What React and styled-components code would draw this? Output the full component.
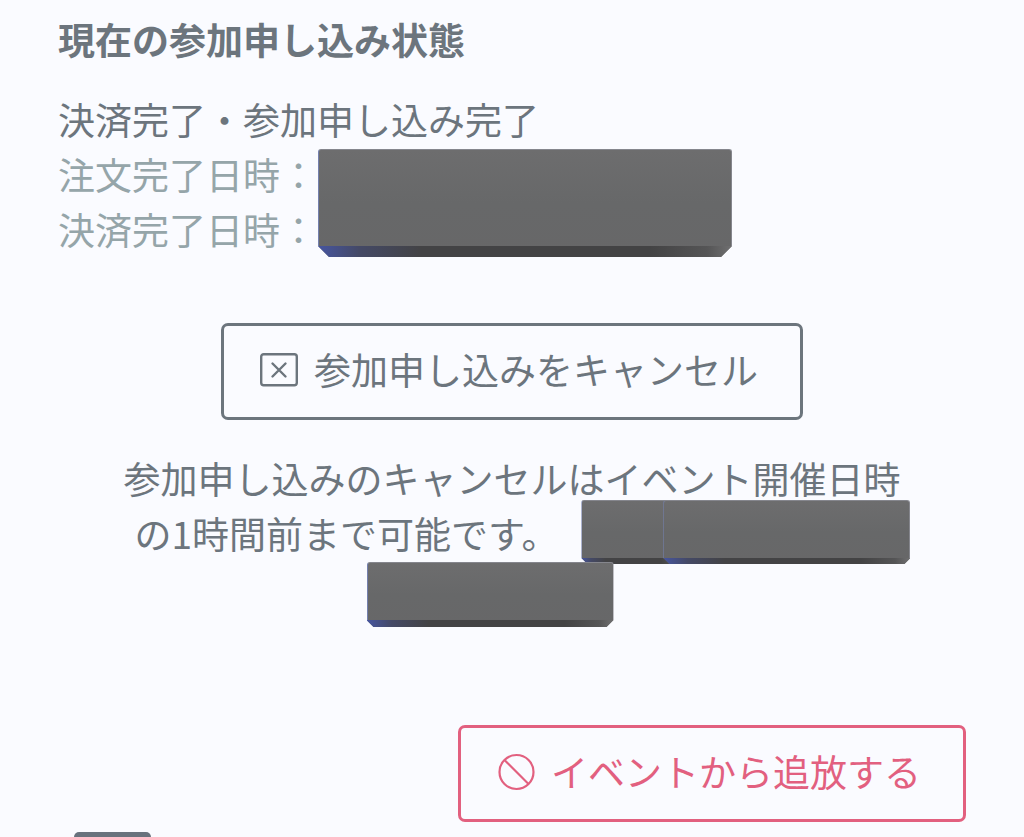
import React from "react";
import styled, { createGlobalStyle } from "styled-components";

const GlobalStyle = createGlobalStyle`
  *, *::before, *::after { box-sizing: border-box; }
  body {
    margin: 0;
    background: #fafbff;
    color: #6c757d;
    font-family: "Noto Sans CJK JP", "Noto Sans", sans-serif;
    font-size: 37px;
    line-height: 55px;
  }
`;

const Page = styled.main`
  display: flex;
  flex-direction: column;
  padding: 12px 58px 0;
`;

const Heading = styled.h1`
  margin: 0 0 25px;
  font-size: 37px;
  line-height: 55px;
  font-weight: 700;
`;

const Status = styled.p`
  margin: 0;
`;

const Dates = styled.div`
  display: flex;
  align-items: flex-start;
  color: #95a5a9;
`;

const DateLabels = styled.div`
  display: flex;
  flex-direction: column;
`;

const Block = styled.span`
  display: inline-block;
  position: relative;
  flex: none;
  width: ${(p) => p.$width}px;
  height: ${(p) => p.$height}px;
  margin: ${(p) => p.$margin || "0"};
  vertical-align: top;
  --cut: ${(p) => p.$bevel}px;
  background: linear-gradient(#6d6d6e, #676869 50%, #676768);
  border: 1px solid #85868d;
  border-left-color: #7480ae;
  border-bottom: 0;
  border-radius: 3px 3px 0 0;
  clip-path: polygon(
    0 0,
    100% 0,
    100% calc(100% - var(--cut)),
    calc(100% - var(--cut)) 100%,
    var(--cut) 100%,
    0 calc(100% - var(--cut))
  );

  &::after {
    content: "";
    position: absolute;
    left: -1px;
    right: -1px;
    bottom: 0;
    height: var(--cut);
    background: linear-gradient(90deg, #4655a0, #444966 10%, #434345 25%, #434344 80%, #555556 94%, #707071);
  }
`;

const Button = styled.button`
  display: flex;
  align-items: center;
  gap: 16px;
  align-self: ${(p) => p.$align};
  margin: ${(p) => p.$gap}px 0 0;
  padding: 16px 42px 20px 36px;
  border: 3px solid currentColor;
  border-radius: 7px;
  background: transparent;
  color: ${(p) => (p.$danger ? "#e2607f" : "#6c757d")};
  font: inherit;
  cursor: pointer;

  svg {
    flex: none;
    fill: none;
    stroke: currentColor;
  }
`;

const Note = styled.p`
  margin: 31px 0 0;
  padding: 0 52px;
  text-align: center;
`;

const NextTab = styled.div`
  width: 77px;
  height: 5px;
  margin: 10px 0 0 16px;
  border-radius: 8px 8px 0 0;
  background: #68727d;
`;

const CancelIcon = () => (
  <svg width="38" height="38" viewBox="0 0 38 38" aria-hidden="true">
    <rect x="1.2" y="3.2" width="35.6" height="31" rx="2.5" strokeWidth="2.4" />
    <path d="M12.5 12.5l13 13M25.5 12.5l-13 13" strokeWidth="2.4" strokeLinecap="round" />
  </svg>
);

const BanIcon = () => (
  <svg width="38" height="38" viewBox="0 0 38 38" aria-hidden="true">
    <circle cx="19.5" cy="19" r="17" strokeWidth="2.2" />
    <path d="M7.5 7l24 24" strokeWidth="2.2" />
  </svg>
);

export default function App() {
  return (
    <>
      <GlobalStyle />
      <Page>
        <Heading>現在の参加申し込み状態</Heading>
        <Status>決済完了・参加申し込み完了</Status>
        <Dates>
          <DateLabels>
            <span>注文完了日時：</span>
            <span>決済完了日時：</span>
          </DateLabels>
          <Block $width={414} $height={108} $bevel={11} $margin="2px 0 0 1px" />
        </Dates>
        <Button type="button" $align="center" $gap={66}>
          <CancelIcon />
          参加申し込みをキャンセル
        </Button>
        <Note>
          参加申し込みのキャンセルはイベント開催日時の1時間前まで可能です。
          <Block $width={100} $height={64} $bevel={6} $margin="-6px -18px -3px 23px" />
          <Block $width={247} $height={64} $bevel={6} $margin="-6px -21px -3px 0" />
          <Block $width={247} $height={65} $bevel={7} $margin="1px 44px -11px 0" />
        </Note>
        <Button type="button" $danger $align="flex-end" $gap={109}>
          <BanIcon />
          イベントから追放する
        </Button>
        <NextTab />
      </Page>
    </>
  );
}
